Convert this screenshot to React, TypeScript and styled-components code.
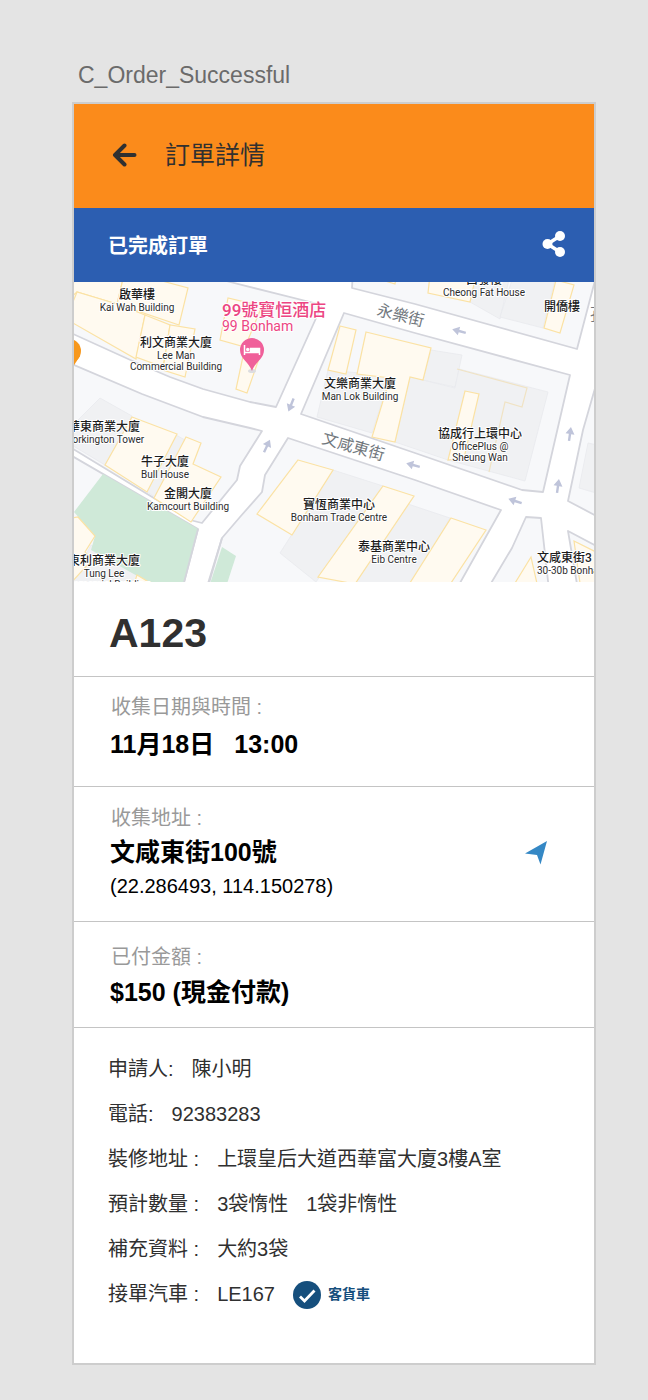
import React from "react";
import styled, { createGlobalStyle } from "styled-components";

const sans = `"Liberation Sans", "Noto Sans CJK TC", sans-serif`;
const line = "#c4c4c4";

const GlobalStyle = createGlobalStyle`
  * { box-sizing: border-box; }
  body {
    margin: 0;
    background: #e4e4e4;
    color: #303030;
    font-family: ${sans};
  }
  h1, h2, p, dl, dt, dd { margin: 0; font-weight: inherit; }
`;

const Page = styled.div`
  min-height: 100vh;
  padding: 60px 52px 35px 72px;
`;

const BoardName = styled.p`
  padding-left: 6px;
  margin-bottom: 12px;
  color: #6b6b6b;
  font-size: 23px;
  line-height: 30px;
`;

const Board = styled.main`
  border: 2px solid #cdcdcd;
  background: #fff;
`;

const Header = styled.header`
  display: flex;
  align-items: center;
  gap: 28px;
  height: 104px;
  padding: 0 38px 2px;
  background: #fb8b1b;
`;

const Title = styled.h1`
  font-size: 25px;
  line-height: 32px;
`;

const IconButton = styled.button`
  display: flex;
  padding: 0;
  border: 0;
  background: none;
  color: inherit;
  cursor: pointer;
`;

const StatusBar = styled.div`
  display: flex;
  align-items: center;
  justify-content: space-between;
  height: 74px;
  padding: 0 28px 2px 34px;
  background: #2c5eb1;
  color: #fff;
  font-size: 20px;
  font-weight: 700;
`;

const MapFrame = styled.figure`
  height: 300px;
  margin: 0;
  overflow: hidden;

  svg { display: block; width: 100%; height: 100%; }
`;

const Section = styled.section<{ $top: number; $bottom: number }>`
  display: flex;
  align-items: center;
  justify-content: space-between;
  padding: ${(p) => p.$top}px 47px ${(p) => p.$bottom}px 36px;
  border-bottom: 1px solid ${line};
`;

const OrderNumber = styled.h2`
  padding: 27px 35px 19px;
  border-bottom: 1px solid ${line};
  font-size: 41px;
  font-weight: 700;
  line-height: 48px;
`;

const Caption = styled.p`
  padding-left: 1px;
  color: #999;
  font-size: 20px;
  line-height: 28px;
`;

const Value = styled.p<{ $gap?: number }>`
  display: flex;
  gap: 20px;
  margin-top: ${(p) => p.$gap ?? 0}px;
  color: #000;
  font-size: 25px;
  font-weight: 700;
  line-height: 36px;
`;

const Coordinates = styled.p`
  color: #000;
  font-size: 20px;
  line-height: 32px;
`;

const Details = styled.dl`
  padding: 19px 34px 46px;
  font-size: 20px;
  line-height: 45px;
`;

const Detail = styled.div`
  display: flex;
  gap: 18px;
`;

const Answer = styled.dd`
  display: flex;
  align-items: center;
  gap: 18px;
`;

const VehicleTag = styled.span`
  display: flex;
  align-items: center;
  gap: 7px;
  color: #164f7d;
  font-size: 14px;
  font-weight: 700;
`;

const yellow = { fill: "#fffaf0", stroke: "#fbe2a4", strokeWidth: 1.2 };
const grey = { fill: "#f0f1f3", stroke: "#e9eaed", strokeWidth: 0.8 };
const green = { fill: "#cfe9d8" };

const blocks = [
  "60,270 190,270 230,282 322,305 276,407 250,402 203,389 170,377 137,363 60,328",
  "353,270 352,288 415,304 577,349 593,288 598,270",
  "344,313 301,414 415,453 522,490 543,492 570,375 415,333",
  "606,350 583,430 568,501 606,521",
  "60,359 142,394 203,417 250,428 262,431 240,466 237,480 202,523 190,520 60,441",
  "60,449 198,529 182,590 60,590",
  "288,438 265,475 262,492 240,517 222,538 206,590 456,590 501,510 415,480",
  "526,517 541,518 549,590 487,590 512,548",
  "568,531 606,551 606,590 578,590",
];

const greyShapes = [
  "470,302 500,319 510,275 478,275",
  "500,317 543,328 555,280 512,280",
  "328,370 317,417 372,433 390,376",
  "431,350 462,355 455,387 423,380",
  "410,377 455,388 459,369 548,392 525,481 448,460 395,442",
  "579,488 588,443 610,448 610,497",
  "100,398 132,416 105,465 60,438",
  "176,435 185,440 155,497 147,492",
  "91,545 135,570 148,590 60,590 74,577",
  "333,470 383,486 316,582 280,553",
  "402,502 450,518 410,590 352,590",
];

const yellowShapes = [
  "76,275 68,300 77,292 117,304 124,275",
  "77,292 66,319 136,359 145,315 117,304",
  "124,275 117,304 179,325 188,288 140,275",
  "145,315 136,357 163,367 170,325",
  "170,325 163,370 185,377 195,329",
  "228,298 220,340 245,347 262,306",
  "245,347 236,389 247,393 262,350",
  "387,270 382,280 395,284 397,270",
  "430,275 428,293 470,302 476,275",
  "556,280 544,328 560,333 574,285",
  "340,326 356,330 346,374 328,370",
  "366,332 431,348 423,380 410,377 395,442 372,437 390,378 357,374",
  "465,391 479,394 464,458 448,460",
  "132,417 177,434 147,492 105,465",
  "186,437 201,443 193,464 221,477 191,522 154,498",
  "60,520 78,517 95,536 85,552 92,560 70,584",
  "137,575 152,584 134,584",
  "298,460 333,470 292,535 257,514",
  "383,486 414,496 355,584 318,577",
  "451,518 486,530 449,586 408,586",
  "531,557 512,588 538,588",
  "574,541 606,557 606,590 581,590",
];

const arrows: [number, number, number][] = [
  [459, 331, 285], [291, 405, 202], [267, 446, 25], [413, 465, 285],
  [515, 501, 288], [570, 434, 8], [558, 486, 8],
];

const places: { x: number; y: number; zh: string; en: string[] }[] = [
  { x: 137, y: 299, zh: "啟華樓", en: ["Kai Wah Building"] },
  { x: 176, y: 347, zh: "利文商業大廈", en: ["Lee Man", "Commercial Building"] },
  { x: 484, y: 284, zh: "昌發樓", en: ["Cheong Fat House"] },
  { x: 562, y: 311, zh: "開僑樓", en: [] },
  { x: 360, y: 388, zh: "文樂商業大廈", en: ["Man Lok Building"] },
  { x: 104, y: 431, zh: "華東商業大廈", en: ["Workington Tower"] },
  { x: 165, y: 466, zh: "牛子大廈", en: ["Bull House"] },
  { x: 188, y: 498, zh: "金閣大廈", en: ["Kamcourt Building"] },
  { x: 480, y: 438, zh: "協成行上環中心", en: ["OfficePlus @", "Sheung Wan"] },
  { x: 339, y: 509, zh: "寶恆商業中心", en: ["Bonham Trade Centre"] },
  { x: 394, y: 551, zh: "泰基商業中心", en: ["Eib Centre"] },
  { x: 104, y: 565, zh: "東利商業大廈", en: ["Tung Lee", "Commercial Building"] },
];

const MapText = styled.text`
  font-family: Roboto, "Noto Sans CJK TC", sans-serif;
  font-size: 10px;
  fill: #2b2b2b;
  paint-order: stroke;
  stroke: #fff;
  stroke-width: 2px;
  stroke-linejoin: round;
`;

const PlaceName = styled(MapText)`
  font-size: 12px;
  font-weight: 500;
  fill: #1c1c1c;
`;

const StreetName = styled(MapText)`
  font-size: 16px;
  fill: #71777d;
`;

const HotelName = styled(MapText)<{ $size: number }>`
  font-size: ${(p) => p.$size}px;
  font-weight: ${(p) => (p.$size > 14 ? 500 : 400)};
  fill: #ec4582;
`;

function StreetMap() {
  return (
    <MapFrame>
      <svg viewBox="74 282 520 300" preserveAspectRatio="xMidYMid slice" role="img" aria-label="文咸東街地圖">
        <rect x="-400" y="282" width="1500" height="300" fill="#fff" />
        {blocks.map((p) => (
          <polygon key={p} points={p} fill="#f7f8fa" stroke="#d4d5dc" strokeWidth="1.8" strokeLinejoin="round" />
        ))}
        {greyShapes.map((p) => <polygon key={p} points={p} {...grey} />)}
        <polygon points="103,474 198,529 182,590 160,590 148,582 91,550 95,536 74,512" {...green} />
        <polygon points="222,547 236,556 225,590 208,590" {...green} />
        {yellowShapes.map((p) => <polygon key={p} points={p} {...yellow} />)}
        <path d="M457 369 527 388 522 407 505 402 489 472" fill="none" stroke="#f0e3c4" strokeWidth="1.2" />
        <path d="M198 529 182 590 M222 538 207 590" fill="none" stroke="#d4d5dc" strokeWidth="1.8" />
        {arrows.map(([x, y, turn]) => (
          <path
            key={`${x}-${y}`}
            transform={`translate(${x} ${y}) rotate(${turn})`}
            d="M0 -7 L4.500 0 H1.200 V7 H-1.200 V0 H-4.500 Z"
            fill="#bfc4da"
          />
        ))}
        <circle cx="69" cy="351" r="12" fill="#f7981d" />
        <path d="M58 356 L69 373 80 356Z" fill="#f7981d" />

        <StreetName transform="translate(376 315) rotate(14)">永樂街</StreetName>
        <StreetName transform="translate(321 443) rotate(16)">文咸東街</StreetName>
        <StreetName x="590" y="320">孖</StreetName>

        {places.map(({ x, y, zh, en }) => (
          <g key={zh} textAnchor="middle">
            <PlaceName x={x} y={y}>{zh}</PlaceName>
            {en.map((row, i) => (
              <MapText key={row} x={x} y={y + 12 + i * 11}>{row}</MapText>
            ))}
          </g>
        ))}
        <PlaceName x="537" y="562">文咸東街3</PlaceName>
        <MapText x="537" y="574">30-30b Bonham</MapText>

        <HotelName x="222" y="316" $size={17}>99號寶恒酒店</HotelName>
        <HotelName x="222" y="331" $size={14}>99 Bonham</HotelName>
        <ellipse cx="252" cy="371" rx="4" ry="2" fill="#dcdde0" />
        <path d="M252 371 C249 362 240 359 240 350 A12 12 0 0 1 264 350 C264 359 255 362 252 371Z" fill="#f0609a" />
        <path
          d="M244.500 345 V355 M244.500 352.500 H259.500 M259.500 355 V348.500 H250.500 V352"
          fill="none"
          stroke="#fff"
          strokeWidth="1.500"
        />
        <rect x="250.500" y="348" width="9" height="4.500" fill="#fff" />
        <circle cx="247.700" cy="349.500" r="1.700" fill="#fff" />
      </svg>
    </MapFrame>
  );
}

export default function App() {
  return (
    <>
      <GlobalStyle />
      <Page>
        <BoardName>C_Order_Successful</BoardName>
        <Board>
          <Header>
            <IconButton type="button" aria-label="返回">
              <svg width="25" height="24" viewBox="0 0 25 24" fill="none" stroke="#303030" strokeWidth="4" strokeLinecap="round" strokeLinejoin="round">
                <path d="M22.500 12 H3.500 M12.500 2.500 L3 12 L12.500 21.500" />
              </svg>
            </IconButton>
            <Title>訂單詳情</Title>
          </Header>
          <StatusBar>
            <span>已完成訂單</span>
            <IconButton type="button" aria-label="分享">
              <svg width="24" height="26" viewBox="0 0 24 26" fill="#fff">
                <path d="M18 5 L5.500 13 L18 21" fill="none" stroke="#fff" strokeWidth="3.500" />
                <circle cx="5.500" cy="13" r="5" />
                <circle cx="18" cy="5" r="5" />
                <circle cx="18" cy="21" r="5" />
              </svg>
            </IconButton>
          </StatusBar>
          <StreetMap />
          <OrderNumber>A123</OrderNumber>
          <Section $top={16} $bottom={24}>
            <div>
              <Caption>收集日期與時間 :</Caption>
              <Value $gap={5}>
                <span>11月18日</span>
                <span>13:00</span>
              </Value>
            </div>
          </Section>
          <Section $top={17} $bottom={19}>
            <div>
              <Caption>收集地址 :</Caption>
              <Value $gap={2}>文咸東街100號</Value>
              <Coordinates>(22.286493, 114.150278)</Coordinates>
            </div>
            <IconButton type="button" aria-label="導航">
              <svg width="22" height="24" viewBox="0 0 22 24" fill="#3588c5">
                <path d="M0 12.500 L22 0 L15.500 23.500 L12 14 Z" />
              </svg>
            </IconButton>
          </Section>
          <Section $top={21} $bottom={17}>
            <div>
              <Caption>已付金額 :</Caption>
              <Value $gap={3}>$150 (現金付款)</Value>
            </div>
          </Section>
          <Details>
            <Detail>
              <dt>申請人:</dt>
              <Answer>陳小明</Answer>
            </Detail>
            <Detail>
              <dt>電話:</dt>
              <Answer>92383283</Answer>
            </Detail>
            <Detail>
              <dt>裝修地址 :</dt>
              <Answer>上環皇后大道西華富大廈3樓A室</Answer>
            </Detail>
            <Detail>
              <dt>預計數量 :</dt>
              <Answer>
                <span>3袋惰性</span>
                <span>1袋非惰性</span>
              </Answer>
            </Detail>
            <Detail>
              <dt>補充資料 :</dt>
              <Answer>大約3袋</Answer>
            </Detail>
            <Detail>
              <dt>接單汽車 :</dt>
              <Answer>
                <span>LE167</span>
                <VehicleTag>
                  <svg width="28" height="28" viewBox="0 0 28 28" aria-hidden="true">
                    <circle cx="14" cy="14" r="14" fill="#164f7d" />
                    <path d="M7 15.500 L11.500 20 L21.500 9.500" fill="none" stroke="#fff" strokeWidth="2.800" />
                  </svg>
                  客貨車
                </VehicleTag>
              </Answer>
            </Detail>
          </Details>
        </Board>
      </Page>
    </>
  );
}
